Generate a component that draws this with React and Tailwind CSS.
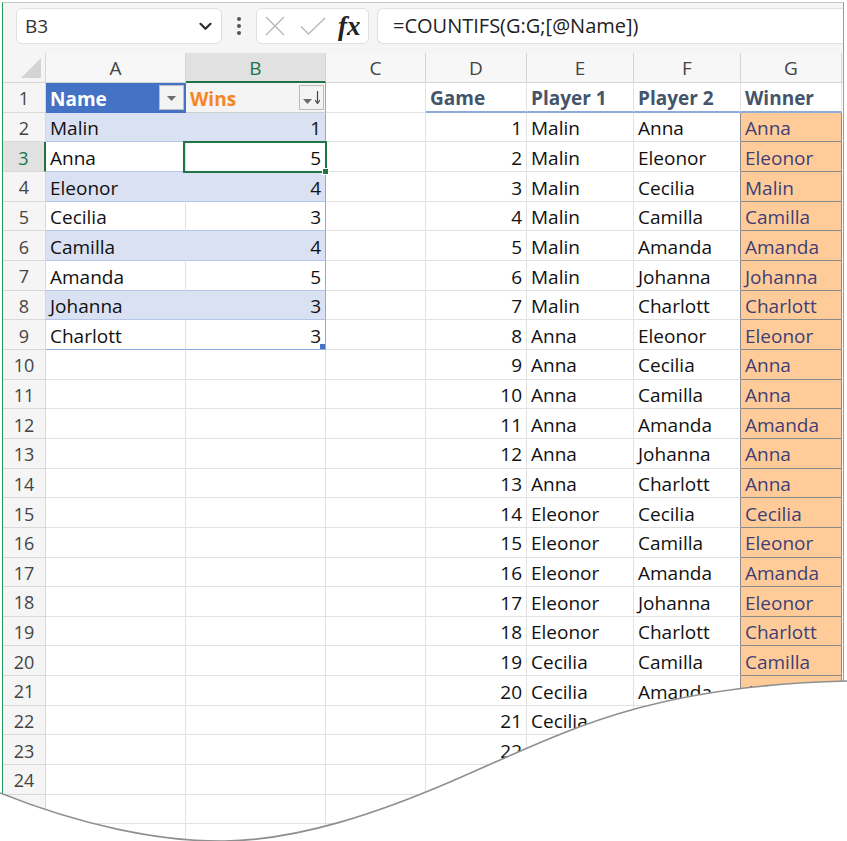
import React from "react";
import { twMerge } from "tailwind-merge";

const names = ["Malin", "Anna", "Eleonor", "Cecilia", "Camilla", "Amanda", "Johanna", "Charlott"];
const wins = [1, 5, 4, 3, 4, 5, 3, 3];

const games = [
  [1, "Malin", "Anna", "Anna"],
  [2, "Malin", "Eleonor", "Eleonor"],
  [3, "Malin", "Cecilia", "Malin"],
  [4, "Malin", "Camilla", "Camilla"],
  [5, "Malin", "Amanda", "Amanda"],
  [6, "Malin", "Johanna", "Johanna"],
  [7, "Malin", "Charlott", "Charlott"],
  [8, "Anna", "Eleonor", "Eleonor"],
  [9, "Anna", "Cecilia", "Anna"],
  [10, "Anna", "Camilla", "Anna"],
  [11, "Anna", "Amanda", "Amanda"],
  [12, "Anna", "Johanna", "Anna"],
  [13, "Anna", "Charlott", "Anna"],
  [14, "Eleonor", "Cecilia", "Cecilia"],
  [15, "Eleonor", "Camilla", "Eleonor"],
  [16, "Eleonor", "Amanda", "Amanda"],
  [17, "Eleonor", "Johanna", "Eleonor"],
  [18, "Eleonor", "Charlott", "Charlott"],
  [19, "Cecilia", "Camilla", "Camilla"],
  [20, "Cecilia", "Amanda", "Amanda"],
  [21, "Cecilia", "Johanna", "Cecilia"],
  [22, "Cecilia", "Charlott", "Cecilia"],
];

const letters = ["A", "B", "C", "D", "E", "F", "G"];
const rows = Array.from({ length: 26 }, (_, i) => i + 1);

const base =
  "relative flex items-center pt-[3px] px-[4px] bg-white border-r border-b border-[#e2e2e2] text-[19px] text-[#111] whitespace-nowrap overflow-hidden";

function Cell({ className, children }) {
  return <div className={twMerge(base, className)}>{children}</div>;
}

function FilterButton({ sort }) {
  return (
    <div className="absolute right-[1px] top-[2px] flex h-[25px] w-[25px] items-center justify-center gap-[3px] border border-[#bcbcbc] bg-[#f3f3f3]">
      <svg width="9" height="5" viewBox="0 0 9 5" className={sort ? "mt-[8px]" : "mt-[2px]"}>
        <path d="M0 0h9L4.5 5z" fill="#6b6b6b" />
      </svg>
      {sort && (
        <svg width="5" height="13" viewBox="0 0 5 13">
          <path d="M2.5 0v11" stroke="#444" strokeWidth="1.2" />
          <path d="M0 9l2.5 3.5L5 9" fill="none" stroke="#444" strokeWidth="1.2" />
        </svg>
      )}
    </div>
  );
}

function rowCells(r) {
  const cells = [];
  const inTable = r >= 2 && r <= 9;
  const band = inTable && r % 2 === 0;
  const game = r >= 2 ? games[r - 2] : null;

  // row header
  cells.push(
    <Cell
      key="h"
      className={twMerge(
        "justify-center px-0 bg-[#f5f5f5] border-[#d8d8d8] text-[18px] text-[#444]",
        r === 3 && "bg-[#e1e1e1] text-[#217346] border-r-2 border-r-[#217346]"
      )}
    >
      {r}
    </Cell>
  );

  // A
  if (r === 1) {
    cells.push(
      <Cell key="a" className="bg-[#4472c4] border-[#4472c4] font-bold text-white">
        Name
        <FilterButton />
      </Cell>
    );
  } else if (inTable) {
    cells.push(
      <Cell
        key="a"
        className={twMerge(
          "border-b-[#b4c6e7]",
          band ? "bg-[#d9e1f2] border-r-[#d9e1f2]" : "",
          r === 9 && "border-b-[#8ea9db]"
        )}
      >
        {names[r - 2]}
      </Cell>
    );
  } else {
    cells.push(<Cell key="a" />);
  }

  // B
  if (r === 1) {
    cells.push(
      <Cell key="b" className="bg-[#f4f4f4] border-b-[#cfcfcf] border-r-[#8ea9db] font-bold text-[#f5861f]">
        Wins
        <FilterButton sort />
      </Cell>
    );
  } else if (inTable) {
    cells.push(
      <Cell
        key="b"
        className={twMerge(
          "justify-end border-b-[#b4c6e7] border-r-[#8ea9db] overflow-visible",
          band && "bg-[#d9e1f2]",
          r === 9 && "border-b-[#8ea9db]",
          r === 3 && "z-10"
        )}
      >
        {wins[r - 2]}
        {r === 3 && (
          <>
            <div className="absolute -left-[3px] -top-[1px] -right-[2px] -bottom-[2px] border-2 border-[#217346]" />
            <div className="absolute -right-[4px] -bottom-[4px] h-[7px] w-[7px] border border-white bg-[#217346]" />
          </>
        )}
        {r === 9 && <div className="absolute right-0 bottom-0 h-[5px] w-[5px] bg-[#4472c4]" />}
      </Cell>
    );
  } else {
    cells.push(<Cell key="b" />);
  }

  // C
  cells.push(<Cell key="c" />);

  // D..G
  if (r === 1) {
    ["Game", "Player 1", "Player 2", "Winner"].forEach((t) =>
      cells.push(
        <Cell key={t} className="border-b-2 border-b-[#8eaadb] font-bold text-[#44546a]">
          {t}
        </Cell>
      )
    );
  } else if (game) {
    cells.push(
      <Cell key="d" className="justify-end">
        {game[0]}
      </Cell>
    );
    cells.push(<Cell key="e">{game[1]}</Cell>);
    cells.push(
      <Cell key="f" className="border-r-[#8a8a8a]">
        {game[2]}
      </Cell>
    );
    cells.push(
      <Cell key="g" className="bg-[#ffcc99] border-[#8a8a8a] text-[#3f3f76]">
        {game[3]}
      </Cell>
    );
  } else {
    ["d", "e", "f", "g"].forEach((k) => cells.push(<Cell key={k} />));
  }

  cells.push(<div key="z" className="bg-white" />);
  return cells;
}

export default function App() {
  return (
    <div className="relative h-[841px] w-[847px] overflow-hidden bg-white font-['Open_Sans',sans-serif]">
      <div className="ml-[2px] mt-[2px] flex h-[839px] w-[842px] flex-col border-l border-r border-t border-l-[#1f9a5b] border-r-[#9c9c9c] border-t-[#c4c4c4] bg-[#f5f5f5]">
        {/* formula bar */}
        <div className="flex h-[50px] shrink-0 items-start pt-[5px]">
          <div className="ml-[13px] flex h-[36px] w-[206px] items-center justify-between rounded-[6px] border border-[#e0e0e0] bg-white pl-[8px] pr-[9px] text-[19px] text-[#333]">
            <span>B3</span>
            <svg width="13" height="9" viewBox="0 0 13 9">
              <path d="M1.5 1.8l5 5 5-5" fill="none" stroke="#2b2b2b" strokeWidth="2.2" strokeLinecap="round" strokeLinejoin="round" />
            </svg>
          </div>
          <div className="flex h-[36px] w-[34px] flex-col items-center justify-center gap-[3.5px]">
            <span className="h-[3.5px] w-[3.5px] rounded-full bg-[#555]" />
            <span className="h-[3.5px] w-[3.5px] rounded-full bg-[#555]" />
            <span className="h-[3.5px] w-[3.5px] rounded-full bg-[#555]" />
          </div>
          <div className="flex h-[36px] w-[113px] items-center rounded-[6px] border border-[#e0e0e0] bg-white pl-[8px]">
            <svg width="20" height="20" viewBox="0 0 20 20">
              <path d="M1 1l18 18M19 1L1 19" stroke="#b8b8b8" strokeWidth="1.4" />
            </svg>
            <svg width="26" height="18" viewBox="0 0 26 18" className="ml-[15px]">
              <path d="M1 9.5l7.5 7.5L25 1" fill="none" stroke="#b8b8b8" strokeWidth="1.4" />
            </svg>
            <span className="ml-[12px] font-['Liberation_Serif',serif] text-[27px] font-bold italic leading-none text-[#222]">
              fx
            </span>
          </div>
          <div className="ml-[8px] flex h-[36px] flex-1 items-center rounded-l-[6px] border border-r-0 border-[#e0e0e0] bg-white pl-[15px] text-[20px] text-[#222]">
            =COUNTIFS(G:G;[@Name])
          </div>
        </div>

        {/* sheet */}
        <div className="grid flex-1 grid-cols-[43px_140px_140px_100px_101px_107px_107px_101px_1fr] grid-rows-[30px] auto-rows-[29.66px] bg-white">
          <div className="relative border-b border-r border-[#d5d5d5] bg-[#f5f5f5]">
            <svg width="20" height="20" viewBox="0 0 20 20" className="absolute right-[4px] bottom-[4px]">
              <path d="M20 0v20H0z" fill="#d4d4d4" />
            </svg>
          </div>
          {letters.map((l) => (
            <div
              key={l}
              className={twMerge(
                "flex items-center justify-center pt-[2px] border-b border-r border-[#d5d5d5] bg-[#f7f7f7] text-[19px] text-[#444]",
                l === "B" && "bg-[#e1e1e1] text-[#217346] border-b-2 border-b-[#217346]"
              )}
            >
              {l}
            </div>
          ))}
          <div className="border-b border-[#d5d5d5] bg-[#f7f7f7]" />
          {rows.map((r) => rowCells(r))}
        </div>
      </div>

      {/* torn-paper edge */}
      <svg className="pointer-events-none absolute inset-0" width="847" height="841" viewBox="0 0 847 841">
        <path
          d="M0 793 C80 825 160 842 225 841 C300 840 380 812 450 782 C560 735 640 686 847 681 L847 841 L0 841 Z"
          fill="#fff"
        />
        <path
          d="M0 793 C80 825 160 842 225 841 C300 840 380 812 450 782 C560 735 640 686 847 681"
          fill="none"
          stroke="#8f8f8f"
          strokeWidth="1.6"
        />
      </svg>
    </div>
  );
}
